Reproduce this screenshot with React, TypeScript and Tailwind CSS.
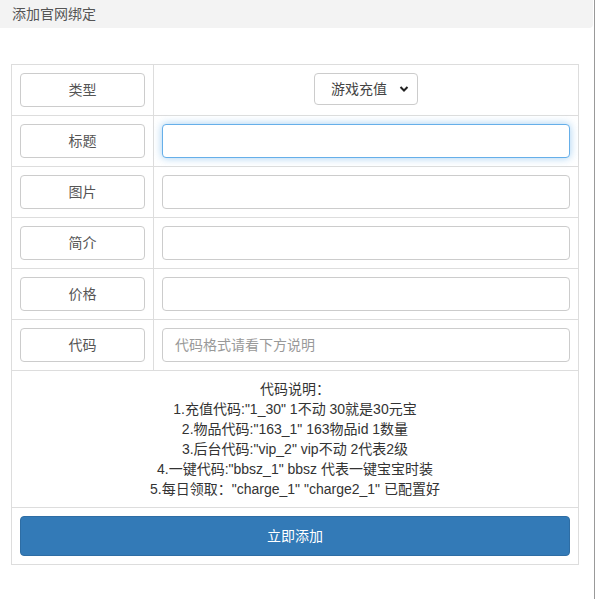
import React from "react";

const font = { fontFamily: '"Liberation Sans", "Noto Sans CJK SC", Arial, sans-serif' };

function Row({ label, children }: { label: string; children: React.ReactNode }) {
  return (
    <div className="flex border-b border-[#ddd] h-[51px]">
      <div className="w-[142px] border-r border-[#ddd] p-2 shrink-0">
        <div className="h-[34px] border border-[#ccc] rounded-[4px] flex items-center justify-center text-[14px] text-[#555] bg-white">
          {label}
        </div>
      </div>
      <div className="flex-1 p-2">{children}</div>
    </div>
  );
}

function Input({ focus, placeholder }: { focus?: boolean; placeholder?: string }) {
  return (
    <div
      className={
        focus
          ? "h-[34px] rounded-[4px] border border-[#66afe9] shadow-[0_0_8px_rgba(102,175,233,0.6)] bg-white"
          : "h-[34px] rounded-[4px] border border-[#ccc] bg-white flex items-center px-3 text-[14px] text-[#999]"
      }
    >
      {placeholder}
    </div>
  );
}

export default function App() {
  return (
    <div className="w-[595px] h-[599px] bg-white border-r border-[#999] text-[#333]" style={font}>
      <div className="w-[593px] h-[28px] bg-[#f3f3f3] rounded-br-[4px] flex items-center pl-3 text-[14px] text-[#555]">
        添加官网绑定
      </div>
      <div className="ml-[11px] mt-[36px] w-[568px] border border-[#ddd] border-b-0">
        <Row label="类型">
          <div className="flex justify-center">
            <div className="h-[32px] w-[104px] border border-[#ccc] rounded-[4px] flex items-center pl-4 pr-2 text-[14px] text-[#444] justify-between">
              <span>游戏充值</span>
              <svg width="10" height="8" viewBox="0 0 10 8">
                <path d="M1.5 2 L5 5.5 L8.5 2" fill="none" stroke="#222" strokeWidth="2" />
              </svg>
            </div>
          </div>
        </Row>
        <Row label="标题">
          <Input focus />
        </Row>
        <Row label="图片">
          <Input />
        </Row>
        <Row label="简介">
          <Input />
        </Row>
        <Row label="价格">
          <Input />
        </Row>
        <Row label="代码">
          <Input placeholder="代码格式请看下方说明" />
        </Row>
        <div className="border-b border-[#ddd] p-2 text-center text-[14px] leading-[20px] text-[#333]">
          <div>代码说明：</div>
          <div>1.充值代码:"1_30" 1不动 30就是30元宝</div>
          <div>2.物品代码:"163_1" 163物品id 1数量</div>
          <div>3.后台代码:"vip_2" vip不动 2代表2级</div>
          <div>4.一键代码:"bbsz_1" bbsz 代表一键宝宝时装</div>
          <div>5.每日领取："charge_1" "charge2_1" 已配置好</div>
        </div>
        <div className="border-b border-[#ddd] p-2">
          <div className="h-[40px] rounded-[4px] bg-[#337ab7] border border-[#2e6da4] flex items-center justify-center text-white text-[14px]">
            立即添加
          </div>
        </div>
      </div>
    </div>
  );
}
